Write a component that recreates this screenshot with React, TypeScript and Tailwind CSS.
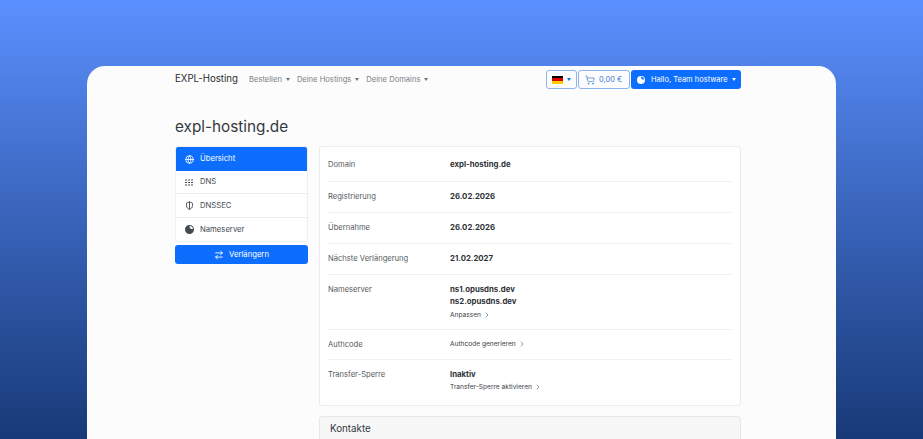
import { ChevronRight, Globe, ShieldHalf, ShoppingCart, ArrowRightLeft } from 'lucide-react';

function Caret({ className = 'text-[#6c757d]' }: { className?: string }) {
  return <span className={`ml-[4px] inline-block h-0 w-0 border-x-[2.5px] border-t-[3px] border-x-transparent border-t-current align-middle ${className}`} />;
}

function NavItem({ label }: { label: string }) {
  return (
    <span className="flex items-center text-[7.6px] text-[#7a7f85]">
      {label}
      <Caret />
    </span>
  );
}

function BlobCircle({ size }: { size: number }) {
  return (
    <svg width={size} height={size} viewBox="0 0 16 16" fill="currentColor">
      <path d="M8 0a8 8 0 1 0 0 16A8 8 0 0 0 8 0zm0 1.6a6.4 6.4 0 0 1 6.3 5.3H10.5L8.6 5 7.8 1.6H8z" />
    </svg>
  );
}

function DnsGrid() {
  return (
    <svg width={9} height={7} viewBox="0 0 9 7" fill="none" stroke="currentColor" strokeWidth={1} strokeDasharray="2 1">
      <path d="M0 1h9M0 3.5h9M0 6h9" />
    </svg>
  );
}

function SideItem({ icon, label, active }: { icon: React.ReactNode; label: string; active?: boolean }) {
  return (
    <div className={`flex items-center gap-[6px] border-b border-[#ececec] pl-[9px] text-[7.7px] last:border-b-0 ${active ? 'h-[24px] border-b-0 bg-[#0d6efd] text-white' : 'h-[23.4px] text-[#444a50]'}`}>
      <span className="flex w-[9px] justify-center">{icon}</span>
      {label}
    </div>
  );
}

function Row({ label, className, children }: { label: string; className: string; children: React.ReactNode }) {
  return (
    <div className={`mx-[8px] flex border-b border-[#f1f1f1] last:border-b-0 ${className}`}>
      <div className="w-[122px] pt-[0.5px] text-[7.6px] leading-[12px] text-[#555b61]">{label}</div>
      <div className="text-[7.8px] leading-[12px] font-bold text-[#2f3338]">{children}</div>
    </div>
  );
}

function SmallLink({ label }: { label: string }) {
  return (
    <div className="flex items-center gap-[2px] text-[6.6px] leading-[12px] font-normal text-[#3b4046]">
      {label}
      <ChevronRight size={8} strokeWidth={1.6} />
    </div>
  );
}

export default function App() {
  return (
    <div className="h-[439px] overflow-hidden bg-gradient-to-b from-[#5b90ff] to-[#183a78] px-[87px] pt-[66px] font-['Inter',sans-serif]">
      <div className="h-[400px] rounded-t-[18px] bg-[#fcfcfc] pr-[95px] pl-[88px]">
        <nav className="flex h-[27px] items-center">
          <span className="mr-[11px] text-[9.7px] text-[#2a2d31]">EXPL-Hosting</span>
          <div className="flex gap-[7px]">
            <NavItem label="Bestellen" />
            <NavItem label="Deine Hostings" />
            <NavItem label="Deine Domains" />
          </div>
          <div className="ml-auto flex gap-[1px]">
            <div className="flex h-[19px] w-[31px] items-center justify-center rounded-[3px] border border-[#8db4ee]">
              <span className="flex h-[8px] w-[11px] flex-col">
                <span className="flex-1 bg-black" />
                <span className="flex-1 bg-[#dd0000]" />
                <span className="flex-1 bg-[#ffce00]" />
              </span>
              <Caret className="text-[#0d6efd]" />
            </div>
            <div className="flex h-[19px] w-[52px] items-center gap-[4px] rounded-[3px] border border-[#8db4ee] pl-[6px] text-[7.5px] whitespace-nowrap text-[#3f7ad9]">
              <ShoppingCart size={10} strokeWidth={1.7} />
              0,00 €
            </div>
            <div className="flex h-[19px] w-[110px] items-center rounded-[3px] bg-[#0d6efd] pl-[6px] text-[7.5px] whitespace-nowrap text-white">
              <span className="mr-[6px]"><BlobCircle size={8} /></span>
              Hallo, Team hostware
              <Caret className="text-white" />
            </div>
          </div>
        </nav>
        <h1 className="mt-[24px] text-[15.3px] leading-[19px] text-[#34383d]">expl-hosting.de</h1>
        <div className="mt-[10px] flex gap-[11px]">
          <aside className="w-[133px] shrink-0">
            <div className="overflow-hidden rounded-[3px] border border-[#efefef] bg-white">
              <SideItem active icon={<Globe size={9} strokeWidth={2.2} />} label="Übersicht" />
              <SideItem icon={<DnsGrid />} label="DNS" />
              <SideItem icon={<ShieldHalf size={9} strokeWidth={2.4} />} label="DNSSEC" />
              <SideItem icon={<BlobCircle size={9} />} label="Nameserver" />
            </div>
            <div className="mt-[3px] flex h-[19px] items-center justify-center gap-[5px] rounded-[3px] bg-[#0d6efd] text-[7.7px] text-white">
              <ArrowRightLeft size={10} strokeWidth={2.2} />
              Verlängern
            </div>
          </aside>
          <main className="min-w-0 flex-1">
            <div className="rounded-[3px] border border-[#ececec] bg-white">
              <Row label="Domain" className="h-[35px] pt-[11px]">expl-hosting.de</Row>
              <Row label="Registrierung" className="h-[31px] pt-[8px]">26.02.2026</Row>
              <Row label="Übernahme" className="h-[31px] pt-[8px]">26.02.2026</Row>
              <Row label="Nächste Verlängerung" className="h-[31px] pt-[8px]">21.02.2027</Row>
              <Row label="Nameserver" className="h-[55px] pt-[8px]">
                <div>ns1.opusdns.dev</div>
                <div>ns2.opusdns.dev</div>
                <div className="mt-[2px]"><SmallLink label="Anpassen" /></div>
              </Row>
              <Row label="Authcode" className="h-[30px] pt-[8px]"><SmallLink label="Authcode generieren" /></Row>
              <Row label="Transfer-Sperre" className="h-[45px] pt-[8px]">
                <div>Inaktiv</div>
                <div className="mt-[1px]"><SmallLink label="Transfer-Sperre aktivieren" /></div>
              </Row>
            </div>
            <div className="mt-[10px] h-[40px] rounded-[3px] border border-[#e8e8e8] bg-[#f7f7f7] px-[10px] pt-[5px] text-[9.8px] leading-[14px] text-[#34383d]">
              Kontakte
            </div>
          </main>
        </div>
      </div>
    </div>
  );
}
